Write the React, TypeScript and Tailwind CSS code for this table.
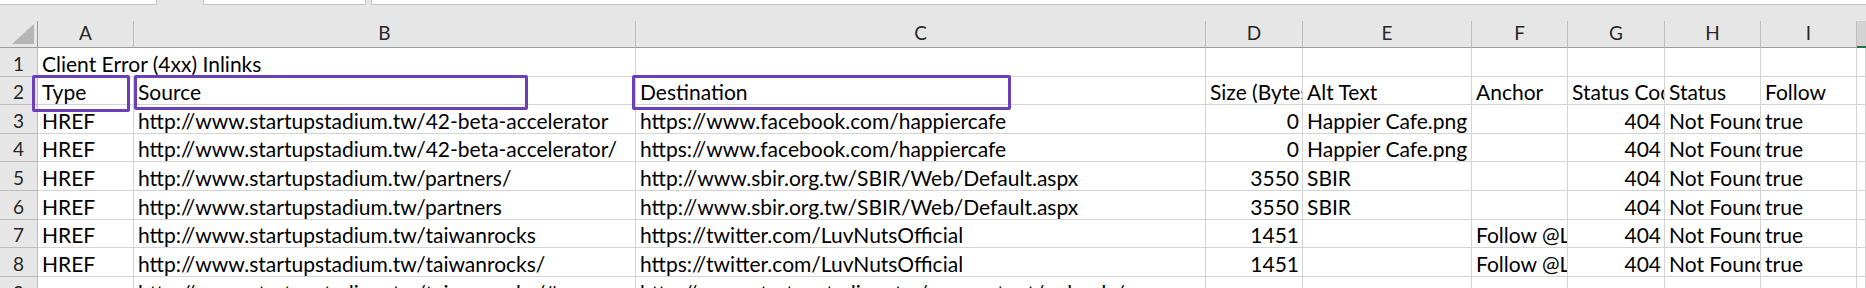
import React from "react";

const font = { fontFamily: "Lato, 'Open Sans', sans-serif" };

const letters = ["A", "B", "C", "D", "E", "F", "G", "H", "I"];
const rightCols = [3, 6];

const rows: string[][] = [
  ["Type", "Source", "Destination", "Size (Bytes)", "Alt Text", "Anchor", "Status Code", "Status", "Follow"],
  ["HREF", "http://www.startupstadium.tw/42-beta-accelerator", "https://www.facebook.com/happiercafe", "0", "Happier Cafe.png", "", "404", "Not Found", "true"],
  ["HREF", "http://www.startupstadium.tw/42-beta-accelerator/", "https://www.facebook.com/happiercafe", "0", "Happier Cafe.png", "", "404", "Not Found", "true"],
  ["HREF", "http://www.startupstadium.tw/partners/", "http://www.sbir.org.tw/SBIR/Web/Default.aspx", "3550", "SBIR", "", "404", "Not Found", "true"],
  ["HREF", "http://www.startupstadium.tw/partners", "http://www.sbir.org.tw/SBIR/Web/Default.aspx", "3550", "SBIR", "", "404", "Not Found", "true"],
  ["HREF", "http://www.startupstadium.tw/taiwanrocks", "https://twitter.com/LuvNutsOfficial", "1451", "", "Follow @LuvNutsOfficial", "404", "Not Found", "true"],
  ["HREF", "http://www.startupstadium.tw/taiwanrocks/", "https://twitter.com/LuvNutsOfficial", "1451", "", "Follow @LuvNutsOfficial", "404", "Not Found", "true"],
  ["", "http://www.startupstadium.tw/taiwanrocks/#", "http://www.startupstadium.tw/wp-content/uploads/", "", "", "", "", "", ""],
];

// row 2..9 heights (row 1 is drawn separately)
const heights = ["h-[28px]", "h-[29px]", "h-[28px]", "h-[29px]", "h-[29px]", "h-[28px]", "h-[29px]", "h-[29px]"];

const grid =
  "grid grid-cols-[38px_96px_502px_570px_97px_169px_96px_97px_96px_96px_1fr]";

function Cell({ text, right }: { text: string; right?: boolean }) {
  return (
    <div
      className={`flex items-end overflow-hidden whitespace-nowrap border-r border-b border-[#d4d4d4] bg-white pb-[2px] text-[21px] leading-none text-black ${
        right ? "justify-end pr-[3px]" : "pl-[4px]"
      }`}
    >
      {text}
    </div>
  );
}

function RowNum({ n }: { n: number }) {
  return (
    <div className="flex items-end justify-center border-r border-b border-[#bdbdbd] bg-[#e6e6e6] pb-[3px] text-[19px] leading-none text-[#262626]">
      {n}
    </div>
  );
}

export default function App() {
  return (
    <div className="h-[288px] w-[1866px] overflow-hidden bg-[#e6e6e6]" style={font}>
      {/* name box / formula bar bottoms */}
      <div className="flex h-[5px]">
        <div className="w-[157px] border-r border-b border-[#c6c6c6] bg-white" />
        <div className="w-[46px]" />
        <div className="w-[163px] border-x border-b border-[#c6c6c6] bg-white" />
        <div className="w-[5px]" />
        <div className="flex-1 border-l border-b border-[#c6c6c6] bg-white" />
      </div>
      <div className="h-[16px]" />

      <div className="relative">
        {/* column headers */}
        <div className={`${grid} h-[27px]`}>
          <div className="relative border-r border-b border-[#9b9b9b] bg-[#e6e6e6]">
            <svg className="absolute right-[3px] bottom-[3px]" width="22" height="20" viewBox="0 0 22 20">
              <polygon points="22,0 22,20 0,20" fill="#b5b5b5" />
            </svg>
          </div>
          {letters.map((l) => (
            <div
              key={l}
              className="flex items-end justify-center border-r border-b border-r-[#bdbdbd] border-b-[#9b9b9b] bg-[#e6e6e6] pb-[5px] text-[19px] leading-none text-[#262626]"
            >
              {l}
            </div>
          ))}
          <div className="border-b-2 border-[#217346] bg-[#d2d2d2]" />
        </div>

        {/* row 1 */}
        <div className={`${grid} h-[29px]`}>
          <RowNum n={1} />
          <div className="col-span-2 flex items-end whitespace-nowrap border-r border-b border-[#d4d4d4] bg-white pb-[2px] pl-[4px] text-[21px] leading-none text-black">
            Client Error (4xx) Inlinks
          </div>
          {[2, 3, 4, 5, 6, 7, 8].map((i) => (
            <Cell key={i} text="" />
          ))}
          <Cell text="" />
        </div>

        {rows.map((r, ri) => (
          <div key={ri} className={`${grid} ${heights[ri]}`}>
            <RowNum n={ri + 2} />
            {r.map((t, ci) => (
              <Cell key={ci} text={t} right={ri > 0 && rightCols.includes(ci)} />
            ))}
            <Cell text="" />
          </div>
        ))}

        {/* annotation boxes */}
        <div className="absolute left-[32px] top-[54px] h-[37px] w-[98px] rounded-[2px] border-[3px] border-[#6b3fb8]" />
        <div className="absolute left-[134px] top-[54px] h-[35px] w-[394px] rounded-[2px] border-[3px] border-[#6b3fb8]" />
        <div className="absolute left-[632px] top-[54px] h-[35px] w-[379px] rounded-[2px] border-[3px] border-[#6b3fb8]" />
      </div>
    </div>
  );
}
